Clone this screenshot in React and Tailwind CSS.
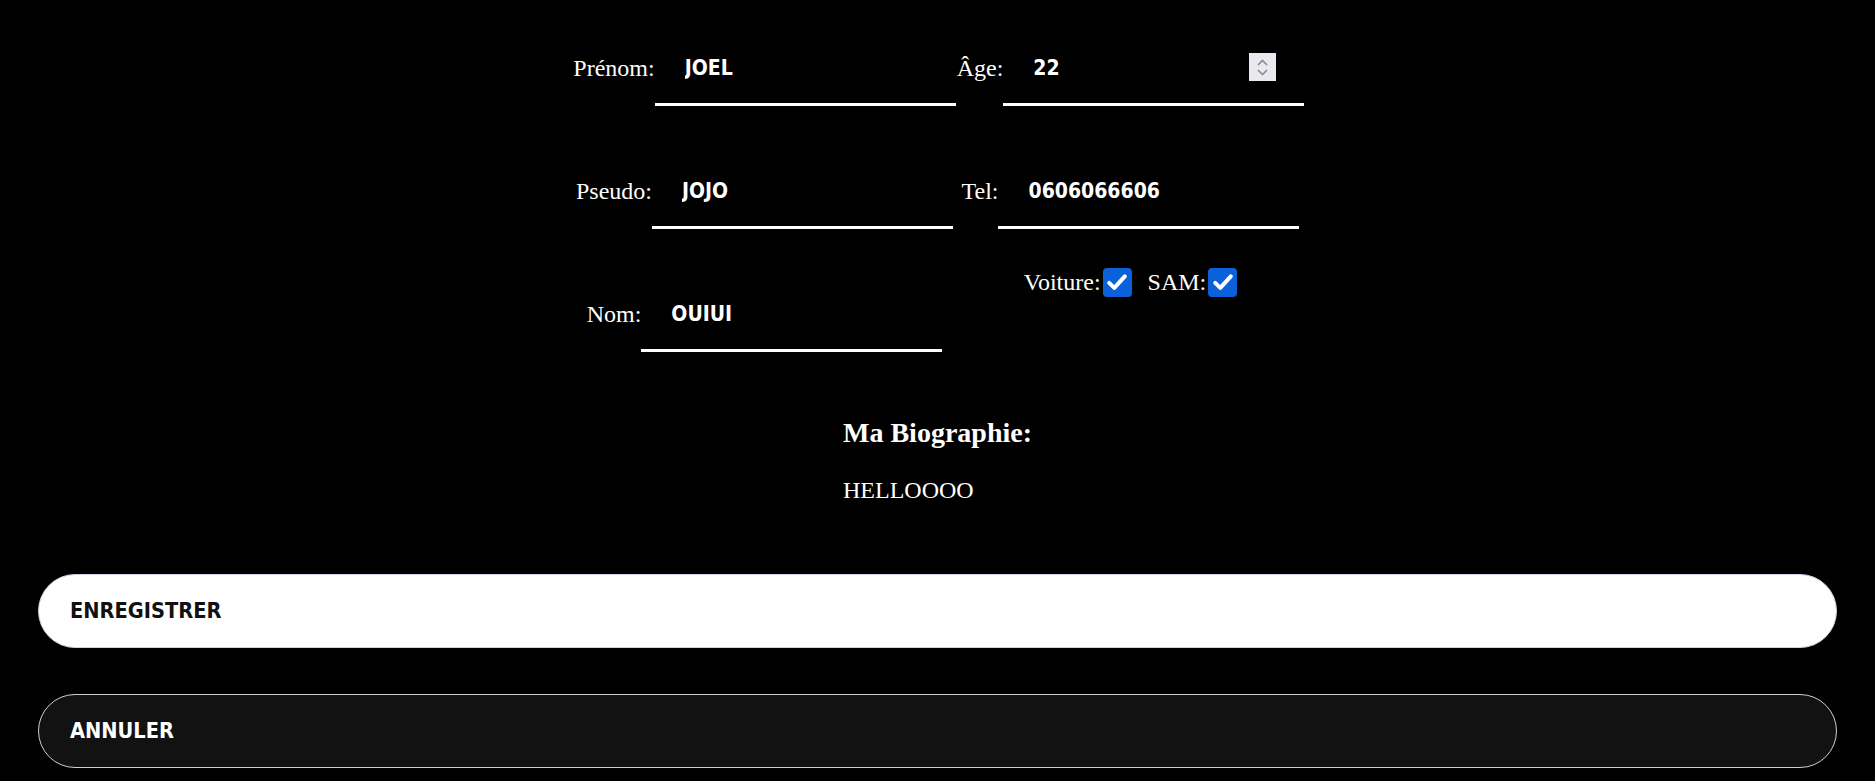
import React from "react";

const serif = { fontFamily: '"Liberation Serif", "Times New Roman", serif' };
const sans = { fontFamily: '"DejaVu Sans Condensed", "DejaVu Sans", Verdana, sans-serif', fontStretch: "condensed" };

function Field({ label, value, spinner }) {
  return (
    <div className="flex h-[73px] items-center justify-center">
      <label className="whitespace-nowrap pb-[4px] text-[24px] leading-[28px] text-white" style={serif}>
        {label}
      </label>
      <div className="relative">
        <input
          readOnly
          value={value}
          className="box-border h-[73px] w-[301px] border-0 border-b-[3px] border-solid border-white bg-transparent px-[30px] text-[21px] font-bold text-white outline-none"
          style={sans}
        />
        {spinner && (
          <div className="absolute right-[28px] top-[20px] flex h-[28px] w-[27px] flex-col items-center justify-center gap-[3px] bg-[#e9e9ee]">
            <svg width="11" height="7" viewBox="0 0 11 7" fill="none">
              <path d="M1 6 L5.5 1.5 L10 6" stroke="#8c8c9c" strokeWidth="1.6" />
            </svg>
            <svg width="11" height="7" viewBox="0 0 11 7" fill="none">
              <path d="M1 1 L5.5 5.5 L10 1" stroke="#8c8c9c" strokeWidth="1.6" />
            </svg>
          </div>
        )}
      </div>
    </div>
  );
}

function Check() {
  return (
    <span className="ml-[2px] flex h-[29px] w-[29px] items-center justify-center rounded-[4px] bg-[#0b61d9]">
      <svg width="24" height="24" viewBox="0 0 16 16" fill="none">
        <path d="M2.8 8.6 L6.2 11.9 L13.2 4.2" stroke="white" strokeWidth="2.7" strokeLinecap="round" strokeLinejoin="round" />
      </svg>
    </span>
  );
}

export default function App() {
  return (
    <div className="min-h-[781px] w-full bg-black pt-[33px]">
      <div className="flex justify-center pl-[20px]">
        <div className="grid grid-cols-[366px_366px] gap-y-[50px]">
          <Field label="Prénom:" value="JOEL" />
          <Field label="Âge:" value="22" spinner />
          <Field label="Pseudo:" value="JOJO" />
          <Field label="Tel:" value="0606066606" />
          <Field label="Nom:" value="OUIUI" />
          <div className="flex justify-center">
            <div className="-mt-[12px] flex h-[30px] items-center text-[24px] leading-[28px] text-white" style={serif}>
              <span>Voiture:</span>
              <Check />
              <span className="ml-[16px]">SAM:</span>
              <Check />
            </div>
          </div>
        </div>
      </div>

      <div className="mt-[65px] flex justify-center">
        <div className="text-white" style={serif}>
          <h3 className="text-[28px] font-bold leading-[32px]">Ma Biographie:</h3>
          <p className="mt-[27px] text-[24px] leading-[28px]">HELLOOOO</p>
        </div>
      </div>

      <div className="mx-[38px] mt-[70px] flex flex-col gap-[46px]">
        <button
          className="flex h-[74px] w-full items-center rounded-full border border-[#d2cfe2] bg-white px-[31px] text-left text-[21.6px] font-bold text-[#111]"
          style={sans}
        >
          ENREGISTRER
        </button>
        <button
          className="flex h-[74px] w-full items-center rounded-full border border-[#cfcdda] bg-[#121212] px-[31px] text-left text-[21.6px] font-bold text-white"
          style={sans}
        >
          ANNULER
        </button>
      </div>
    </div>
  );
}
